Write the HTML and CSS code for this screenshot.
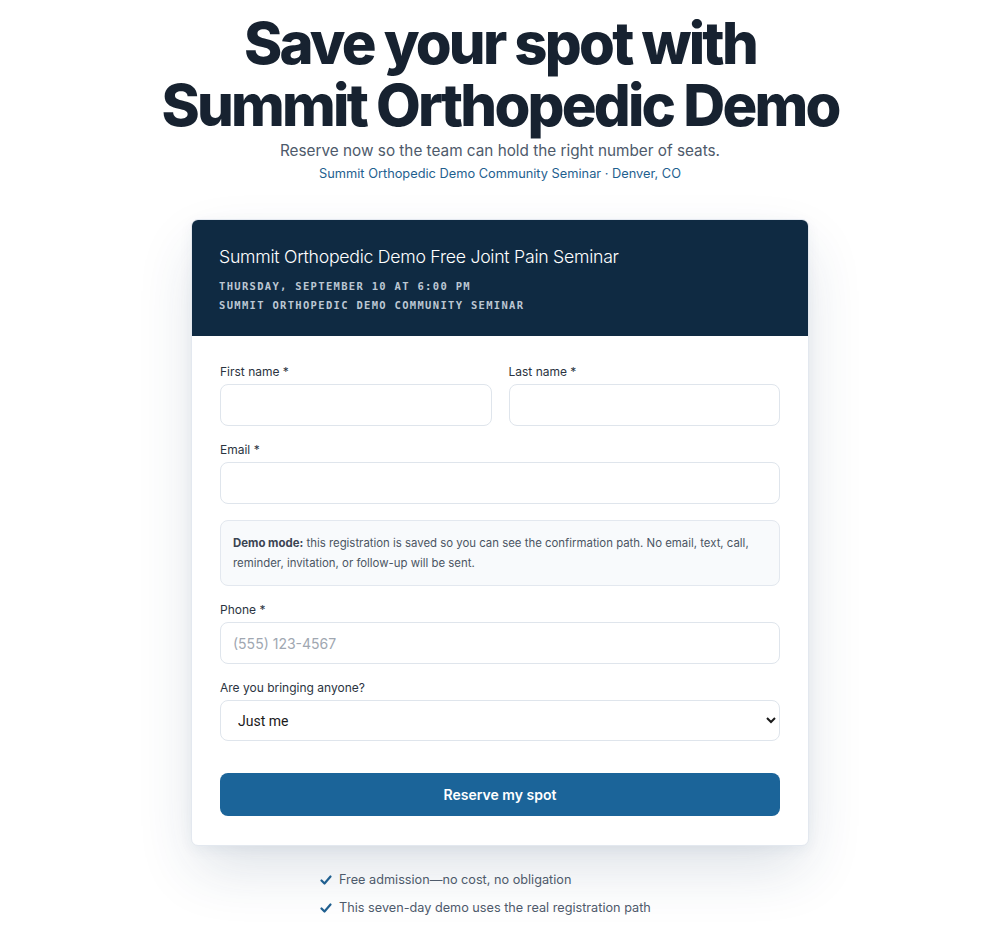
FILE: index.html
```html
<!DOCTYPE html>
<html lang="en">
<head>
<meta charset="utf-8">
<title>Save your spot</title>
<link rel="stylesheet" href="styles.css">
</head>
<body>
<main class="page">
  <header class="hero">
    <h1 class="hero-title">Save your spot with<br>Summit Orthopedic Demo</h1>
    <p class="hero-sub">Reserve now so the team can hold the right number of seats.</p>
    <p class="hero-meta">Summit Orthopedic Demo Community Seminar · Denver, CO</p>
  </header>

  <section class="card">
    <div class="card-head">
      <h2 class="event-title">Summit Orthopedic Demo Free Joint Pain Seminar</h2>
      <p class="event-line">THURSDAY, SEPTEMBER 10 AT 6:00 PM</p>
      <p class="event-line">SUMMIT ORTHOPEDIC DEMO COMMUNITY SEMINAR</p>
    </div>
    <form class="card-body">
      <div class="row">
        <div class="field">
          <label class="label" for="fn">First name *</label>
          <input class="input" id="fn" type="text">
        </div>
        <div class="field">
          <label class="label" for="ln">Last name *</label>
          <input class="input" id="ln" type="text">
        </div>
      </div>
      <div class="field">
        <label class="label" for="em">Email *</label>
        <input class="input" id="em" type="email">
      </div>
      <div class="notice"><strong>Demo mode:</strong> this registration is saved so you can see the confirmation path. No email, text, call, reminder, invitation, or follow-up will be sent.</div>
      <div class="field">
        <label class="label" for="ph">Phone *</label>
        <input class="input" id="ph" type="tel" placeholder="(555) 123-4567">
      </div>
      <div class="field">
        <label class="label" for="gs">Are you bringing anyone?</label>
        <select class="select" id="gs">
          <option>Just me</option>
          <option>+1 guest</option>
          <option>+2 guests</option>
        </select>
      </div>
      <button class="submit" type="button">Reserve my spot</button>
    </form>
  </section>

  <ul class="perks">
    <li class="perk"><svg class="check" viewBox="0 0 12 12" width="12" height="12"><path d="M1.5 6.5 L4.5 9.5 L10.5 2.5" fill="none" stroke="currentColor" stroke-width="2.2" stroke-linecap="round" stroke-linejoin="round"/></svg>Free admission—no cost, no obligation</li>
    <li class="perk"><svg class="check" viewBox="0 0 12 12" width="12" height="12"><path d="M1.5 6.5 L4.5 9.5 L10.5 2.5" fill="none" stroke="currentColor" stroke-width="2.2" stroke-linecap="round" stroke-linejoin="round"/></svg>This seven-day demo uses the real registration path</li>
    <li class="perk"><svg class="check" viewBox="0 0 12 12" width="12" height="12"><path d="M1.5 6.5 L4.5 9.5 L10.5 2.5" fill="none" stroke="currentColor" stroke-width="2.2" stroke-linecap="round" stroke-linejoin="round"/></svg>Your email and phone stay private—nothing will be sent</li>
  </ul>
</main>
</body>
</html>
```

FILE: styles.css
```css
* { box-sizing: border-box; }

html, body {
  margin: 0;
  padding: 0;
  background: #ffffff;
}

body {
  font-family: Inter, "Noto Sans", Roboto, sans-serif;
  color: #1a2433;
}

.page {
  display: flex;
  flex-direction: column;
  align-items: center;
  padding-top: 12px;
}

.hero {
  text-align: center;
}

.hero-title {
  margin: 0;
  font-family: Inter, sans-serif;
  font-size: 58px;
  line-height: 62px;
  font-weight: 800;
  letter-spacing: -0.048em;
  color: #172230;
}

.hero-sub {
  margin: 3px 0 0;
  font-size: 15.3px;
  line-height: 24px;
  color: #4e5a6b;
}

.hero-meta {
  margin: 1px 0 0;
  font-size: 12.8px;
  line-height: 20px;
  color: #1f5f8f;
}

.card {
  margin-top: 35px;
  width: 618px;
  background: #ffffff;
  border: 1px solid #e3e8ef;
  border-radius: 7px;
  overflow: hidden;
  box-shadow: 0 26px 60px -6px rgba(28, 60, 100, 0.16), 0 4px 14px rgba(28, 60, 100, 0.05);
}

.card-head {
  background: #0f2a42;
  padding: 26px 28px 21px;
  margin: -1px -1px 0;
}

.event-title {
  margin: 0;
  font-size: 17.7px;
  line-height: 24px;
  font-weight: 300;
  letter-spacing: -0.015em;
  color: #ffffff;
}

.event-title + .event-line {
  margin-top: 8px;
}

.event-line {
  margin: 0;
  font-family: "DejaVu Sans Mono", "Liberation Mono", monospace;
  font-size: 10.5px;
  line-height: 19px;
  font-weight: 700;
  letter-spacing: 0.125em;
  color: #bcc7d3;
}

.card-body {
  display: flex;
  flex-direction: column;
  gap: 16px;
  padding: 28px 28px 29px;
}

.row {
  display: grid;
  grid-template-columns: 1fr 1fr;
  gap: 17px;
}

.field {
  display: flex;
  flex-direction: column;
}

.label {
  font-size: 12px;
  line-height: 16px;
  margin-bottom: 4px;
  color: #2b3441;
}

.input,
.select {
  height: 42px;
  width: 100%;
  border: 1px solid #dfe5ec;
  border-radius: 8px;
  background: #ffffff;
  padding: 0 12px;
  font-family: Inter, sans-serif;
  font-size: 14px;
  color: #1a2433;
  outline: none;
}

.input::placeholder {
  color: #a0a7b1;
}

.select {
  height: 41px;
  padding: 0 12px 0 13px;
  font-family: Roboto, sans-serif;
  font-size: 14px;
  color: #1a1a1a;
}

.notice {
  background: #f8fafc;
  border: 1px solid #e3e8ef;
  border-radius: 8px;
  padding: 12px;
  font-size: 11.4px;
  line-height: 20px;
  color: #4b5563;
}

.notice strong {
  font-weight: 700;
  color: #3b4452;
}

.submit {
  margin-top: 16px;
  height: 43px;
  width: 100%;
  border: 0;
  border-radius: 8px;
  background: #1b6499;
  color: #ffffff;
  font-family: Inter, sans-serif;
  font-size: 14px;
  font-weight: 600;
}

.perks {
  list-style: none;
  margin: 24px 0 0;
  padding: 0;
  width: 360px;
  display: flex;
  flex-direction: column;
  gap: 8px;
  font-size: 12.7px;
  line-height: 20px;
  color: #4e5a6b;
}

.perk {
  display: flex;
  align-items: center;
  gap: 7px;
}

.check {
  color: #1f5f8f;
  flex: none;
}
```
